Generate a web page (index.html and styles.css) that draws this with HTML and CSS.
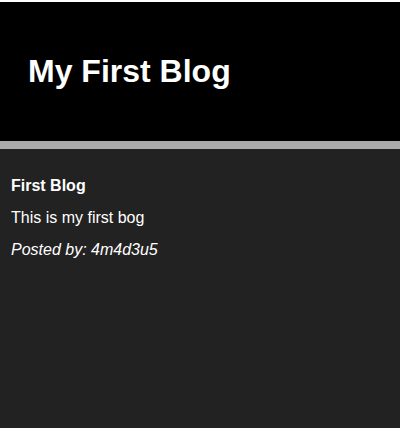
FILE: index.html
```html
<!DOCTYPE html>
<html>
<head>
<meta charset="utf-8">
<link rel="stylesheet" href="styles.css">
</head>
<body>
<header class="header">
  <h1 class="title">My First Blog</h1>
</header>
<main class="content">
  <article class="post">
    <h2 class="post-title">First Blog</h2>
    <p class="post-body">This is my first bog</p>
    <p class="post-author">Posted by: 4m4d3u5</p>
  </article>
</main>
</body>
</html>
```
FILE: styles.css
```css
html, body {
  margin: 0;
  padding: 0;
}
body {
  background: #222222;
  color: #ffffff;
  font-family: "Liberation Sans", Arial, sans-serif;
  min-height: 428px;
  border-top: 2px solid #ffffff;
  box-sizing: border-box;
}
.header {
  background: #000000;
  height: 139px;
  border-bottom: 8px solid #aaaaaa;
  display: flex;
  align-items: center;
  padding-left: 28px;
  box-sizing: content-box;
}
.title {
  margin: 0;
  font-size: 32px;
  font-weight: bold;
  line-height: 37px;
}
.content {
  padding: 28px 11px;
}
.post {
  display: flex;
  flex-direction: column;
  gap: 14px;
}
.post-title, .post-body, .post-author {
  margin: 0;
  font-size: 16px;
  line-height: 18px;
}
.post-title {
  font-weight: bold;
}
.post-author {
  font-style: italic;
}
```
